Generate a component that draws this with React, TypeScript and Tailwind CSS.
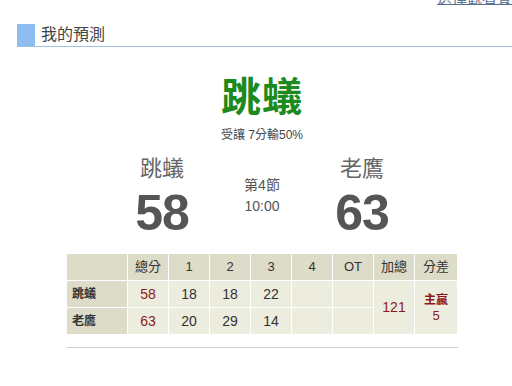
import React from "react";

const cjk = { fontFamily: '"Liberation Sans", "Noto Sans CJK TC", sans-serif' };

export default function App() {
  const q = [
    { name: "跳蟻", total: 58, s: [18, 18, 22, "", ""] },
    { name: "老鷹", total: 63, s: [20, 29, 14, "", ""] },
  ];
  const th = "border border-white bg-[#dcdcc8] font-normal text-[13px] text-[#333] h-[27px] p-0";
  const td = "border border-white bg-[#ececdf] text-[14px] text-[#333] h-[27px] p-0 text-center";
  return (
    <div className="w-[512px] h-[386px] bg-white relative overflow-hidden" style={cjk}>
      <a className="absolute left-[437px] top-[-13px] text-[15px] text-[#5a6f8e] underline whitespace-nowrap">選擇觀看賽事</a>
      <div className="pt-[24px] pl-[17px]">
        <div className="flex items-stretch h-[23px] border-b border-[#9ec3e2]">
          <div className="w-[18px] bg-[#8dbcf0]" />
          <div className="pl-[6px] text-[16px] leading-[22px] text-[#444]">我的預測</div>
        </div>
        <div className="flex flex-col items-center w-[490px]">
          <div className="mt-[28px] text-[40px] leading-[44px] font-bold text-[#1c8a1c] tracking-[1px]">跳蟻</div>
          <div className="mt-[9px] text-[12px] leading-[14px] text-[#444]">受讓 7分輸50%</div>
          <div className="mt-[14px] flex items-start">
            <div className="flex flex-col items-center w-[60px]">
              <div className="text-[22px] leading-[26px] text-[#666]">跳蟻</div>
              <div className="text-[50px] leading-[50px] font-bold text-[#555] tracking-[-1px] mt-[6px]">58</div>
            </div>
            <div className="flex flex-col items-center w-[140px] mt-[19px] text-[14px] leading-[21px] text-[#555]">
              <div>第4節</div>
              <div>10:00</div>
            </div>
            <div className="flex flex-col items-center w-[60px]">
              <div className="text-[22px] leading-[26px] text-[#666]">老鷹</div>
              <div className="text-[50px] leading-[50px] font-bold text-[#555] tracking-[-1px] mt-[6px]">63</div>
            </div>
          </div>
          <table className="mt-[15px] w-[391px] border-collapse border border-[#cfcfc6] table-fixed">
            <colgroup>
              <col className="w-[61px]" />
              <col className="w-[41px]" />
              <col className="w-[41px]" />
              <col className="w-[41px]" />
              <col className="w-[41px]" />
              <col className="w-[41px]" />
              <col className="w-[41px]" />
              <col className="w-[41px]" />
              <col className="w-[43px]" />
            </colgroup>
            <thead>
              <tr>
                <th className={th}></th>
                <th className={th}>總分</th>
                <th className={th}>1</th>
                <th className={th}>2</th>
                <th className={th}>3</th>
                <th className={th}>4</th>
                <th className={th}>OT</th>
                <th className={th}>加總</th>
                <th className={th}>分差</th>
              </tr>
            </thead>
            <tbody>
              {q.map((r, i) => (
                <tr key={r.name}>
                  <td className="border border-white bg-[#dcdcc8] text-[12px] font-bold text-[#333] h-[27px] pl-[5px] text-left">{r.name}</td>
                  <td className={td + " !text-[#8b1a1a]"}>{r.total}</td>
                  {r.s.map((v, j) => (
                    <td key={j} className={td}>{v}</td>
                  ))}
                  {i === 0 && (
                    <>
                      <td rowSpan={2} className={td + " !text-[#8b1a1a]"}>121</td>
                      <td rowSpan={2} className={td + " !text-[#8b1a1a] !leading-[15px] font-bold"}>
                        <div className="text-[12px]">主贏</div>
                        <div className="font-normal text-[13px]">5</div>
                      </td>
                    </>
                  )}
                </tr>
              ))}
            </tbody>
          </table>
          <div className="mt-[12px] w-[391px] h-px bg-[#d0d0d0]" />
        </div>
      </div>
    </div>
  );
}
